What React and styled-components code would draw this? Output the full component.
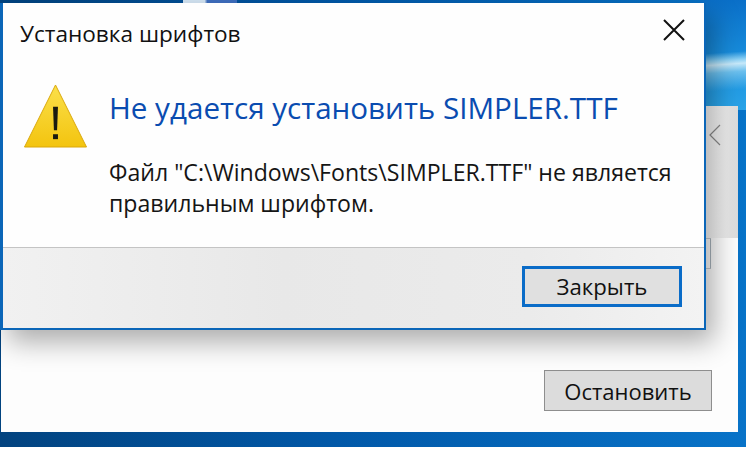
import React from "react";
import styled, { createGlobalStyle } from "styled-components";

const Global = createGlobalStyle`
    html, body {
        margin: 0;
        background: #fff;
    }
    body {
        width: 752px;
        height: 454px;
        overflow: hidden;
        font-family: "Open Sans", "Noto Sans", "Liberation Sans", sans-serif;
    }
`

const Desktop = styled.div`
    position: relative;
    width: 746px;
    height: 447px;
    overflow: hidden;
    background: linear-gradient(90deg, #02437f 0%, #0158a8 45%, #0873c8 100%);
`

const Glow = styled.div`
    position: absolute;
    left: 700px;
    top: 0;
    width: 46px;
    height: 110px;
    background:
        linear-gradient(176deg, transparent 54px, #8fd2f5 62px, #c7e9fa 66px, #6cc0ee 74px, transparent 92px),
        linear-gradient(180deg, #0a6fc8 0%, #1b93e0 60%, #2aa4e8 100%);
`

const TopGlint = styled.div`
    position: absolute;
    left: 183px;
    top: 0;
    width: 54px;
    height: 3px;
    background: linear-gradient(90deg, #d5e6f5 0 40%, #3f6fc0 45% 100%);
`

const BackWindow = styled.div`
    position: absolute;
    left: 1px;
    top: 106px;
    width: 737px;
    height: 326px;
    background: #fdfdfd;
    display: flex;
    flex-direction: column;
    align-items: flex-end;
`

const BackHeader = styled.div`
    width: 32px;
    height: 132px;
    flex: none;
    display: flex;
    align-items: flex-start;
    padding: 18px 0 0 2px;
    box-sizing: border-box;
    background: linear-gradient(90deg, #fafafa 0%, #ececec 60%, #dcdcdc 100%);
`

const BackField = styled.div`
    width: 28px;
    height: 31px;
    margin-right: 27px;
    flex: none;
    box-sizing: border-box;
    border-right: 1px solid #a9b4bd;
    border-top: 1px solid #c9ced2;
    border-bottom: 1px solid #c9ced2;
`

const BackFooter = styled.div`
    margin-top: 101px;
    margin-right: 26px;
`

const StopButton = styled.div`
    width: 168px;
    height: 41px;
    box-sizing: border-box;
    border: 1px solid #8e8e8e;
    background: #dcdcdc;
    display: flex;
    align-items: center;
    justify-content: center;
    font-size: 22px;
    color: #111;
`

const Dialog = styled.div`
    position: absolute;
    left: 0;
    top: 3px;
    width: 706px;
    height: 327px;
    box-sizing: border-box;
    border: 3px solid #0b66b8;
    border-width: 0 2px 2px 3px;
    background: #fefefe;
    display: flex;
    flex-direction: column;
    box-shadow: 8px 12px 26px rgba(0, 0, 0, 0.32);
`

const TitleBar = styled.div`
    display: flex;
    align-items: center;
    justify-content: space-between;
    height: 52px;
    padding: 8px 18px 0 17px;
    box-sizing: border-box;
    flex: none;
`

const Title = styled.div`
    font-size: 22.6px;
    color: #111;
`

const CloseIcon = styled.svg`
    width: 24px;
    height: 24px;
    display: block;
    margin-top: -6px;
`

const Content = styled.div`
    flex: 1;
    display: flex;
    padding: 29px 0 0 20px;
    gap: 21px;
`

const WarnIcon = styled.svg`
    width: 65px;
    height: 65px;
    flex: none;
    display: block;
`

const Message = styled.div`
    display: flex;
    flex-direction: column;
`

const Heading = styled.div`
    font-size: 29.6px;
    line-height: 40px;
    color: #0a4cb0;
    margin-top: 4px;
`

const Body = styled.div`
    font-size: 23.1px;
    line-height: 31px;
    color: #151515;
    margin-top: 29px;
    width: 585px;
`

const Footer = styled.div`
    height: 81px;
    flex: none;
    box-sizing: border-box;
    border-top: 1px solid #c4c4c4;
    background: linear-gradient(90deg, #f1f1f1 0%, #e8e8e8 40%, #ebebeb 75%, #f3f3f3 100%);
    display: flex;
    justify-content: flex-end;
    align-items: flex-start;
    padding: 18px 22px 0 0;
`

const CloseButton = styled.div`
    width: 160px;
    height: 41px;
    box-sizing: border-box;
    border: 3px solid #0a6cc8;
    background: #e0e0e0;
    display: flex;
    align-items: center;
    justify-content: center;
    font-size: 22.2px;
    color: #111;
`

function App() {
    return (
        <Desktop>
            <Global />
            <Glow />
            <TopGlint />
            <BackWindow>
                <BackHeader>
                    <svg width="14" height="22" viewBox="0 0 14 22">
                        <path d="M12 1 L2 11 L12 21" fill="none" stroke="#8a8a8a" strokeWidth="1.2" />
                    </svg>
                </BackHeader>
                <BackField />
                <BackFooter>
                    <StopButton>Остановить</StopButton>
                </BackFooter>
            </BackWindow>
            <Dialog>
                <TitleBar>
                    <Title>Установка шрифтов</Title>
                    <CloseIcon viewBox="0 0 24 24">
                        <path d="M2 2 L22 22 M22 2 L2 22" fill="none" stroke="#111" strokeWidth="2" />
                    </CloseIcon>
                </TitleBar>
                <Content>
                    <WarnIcon viewBox="0 0 66 66">
                        <defs>
                            <linearGradient id="warn" x1="0" y1="0" x2="0" y2="1">
                                <stop offset="0" stopColor="#fbe04a" />
                                <stop offset="1" stopColor="#f3c40f" />
                            </linearGradient>
                        </defs>
                        <path d="M33 1 L64.5 64 L1.5 64 Z" fill="url(#warn)" stroke="#d9a80c" strokeWidth="1" />
                        <path d="M30.5 23 H35.5 L34.6 47 H31.4 Z" fill="#1a1a10" />
                        <rect x="30.5" y="51" width="5" height="5" fill="#1a1a10" />
                    </WarnIcon>
                    <Message>
                        <Heading>Не удается установить SIMPLER.TTF</Heading>
                        <Body>Файл "C:\Windows\Fonts\SIMPLER.TTF" не является правильным шрифтом.</Body>
                    </Message>
                </Content>
                <Footer>
                    <CloseButton>Закрыть</CloseButton>
                </Footer>
            </Dialog>
        </Desktop>
    )
}

export default App
